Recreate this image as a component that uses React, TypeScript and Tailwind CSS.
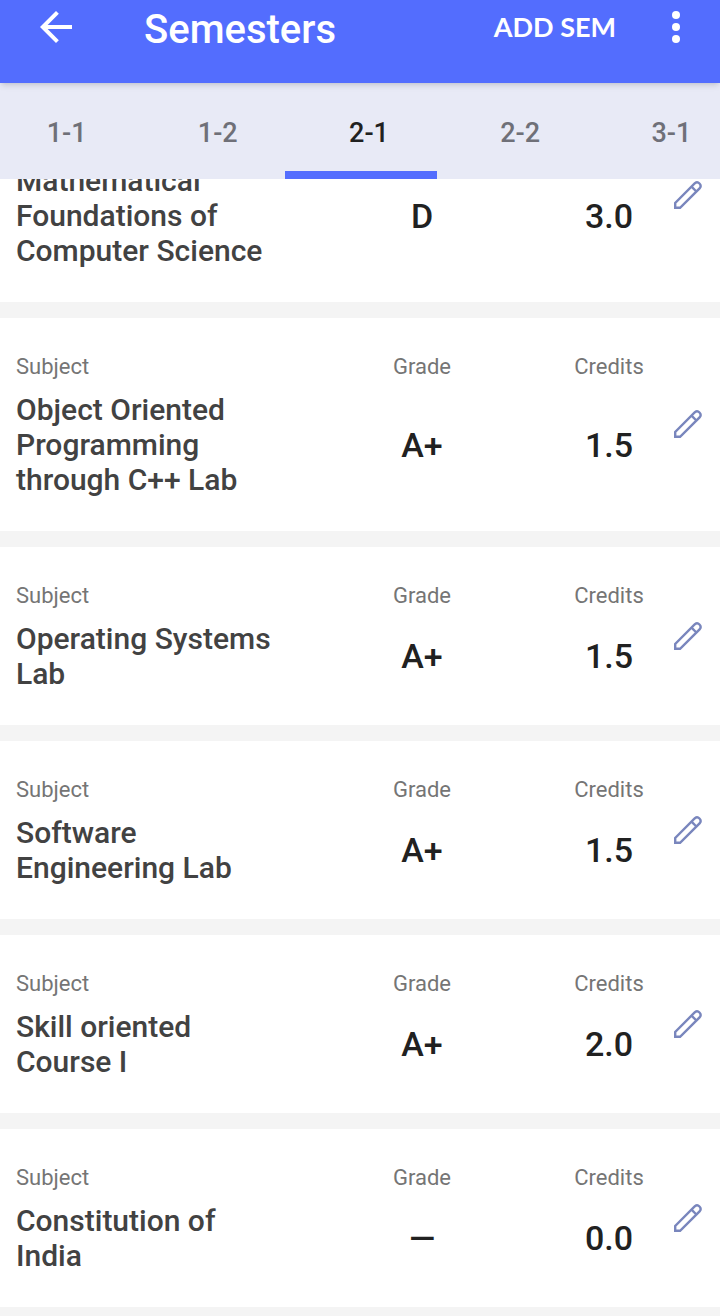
import { useState } from "react"

type Subject = {
  name: string
  grade: string
  credits: string
}

const semesters = ["1-1", "1-2", "2-1", "2-2", "3-1"]

const subjects: Subject[] = [
  { name: "Mathematical Foundations of Computer Science", grade: "D", credits: "3.0" },
  { name: "Object Oriented Programming through C++ Lab", grade: "A+", credits: "1.5" },
  { name: "Operating Systems Lab", grade: "A+", credits: "1.5" },
  { name: "Software Engineering Lab", grade: "A+", credits: "1.5" },
  { name: "Skill oriented Course I", grade: "A+", credits: "2.0" },
  { name: "Constitution of India", grade: "—", credits: "0.0" },
]

function BackIcon() {
  return (
    <svg width="48" height="48" viewBox="0 0 24 24" fill="#fff" aria-hidden="true">
      <path d="M20 11H7.83l5.59-5.59L12 4l-8 8 8 8 1.41-1.41L7.83 13H20v-2z" />
    </svg>
  )
}

function MoreIcon() {
  return (
    <svg width="48" height="48" viewBox="0 0 24 24" fill="#fff" aria-hidden="true">
      <circle cx="12" cy="6" r="2" />
      <circle cx="12" cy="12" r="2" />
      <circle cx="12" cy="18" r="2" />
    </svg>
  )
}

function PencilIcon() {
  return (
    <svg
      width="28"
      height="28"
      viewBox="0 0 28 28"
      fill="none"
      stroke="#7986bd"
      strokeWidth="2.4"
      aria-hidden="true"
    >
      <path d="M1.2 26.8v-4.9L20.9 2.2a3.5 3.5 0 0 1 4.9 4.9L6.1 26.8z" />
      <path d="M17.5 5.6l4.9 4.9" />
    </svg>
  )
}

function Label({ text, hidden }: { text: string; hidden: boolean }) {
  return (
    <dt
      className={
        hidden
          ? "invisible mb-3 text-[22px] leading-[26px]"
          : "mb-3 text-[22px] leading-[26px] text-[#757575]"
      }
    >
      {text}
    </dt>
  )
}

function SubjectCard({ name, grade, credits, tucked }: Subject & { tucked: boolean }) {
  return (
    <li className="flex items-center bg-white pt-9 pr-1 pb-[34px] pl-4">
      <dl className="grid flex-1 grid-cols-[270px_1fr_102px]">
        <div>
          <Label text="Subject" hidden={tucked} />
          <dd className="text-[30px] leading-[35px] font-medium text-[#424242]">{name}</dd>
        </div>
        <div className="flex flex-col items-center">
          <Label text="Grade" hidden={tucked} />
          <dd className="flex flex-1 items-center text-[34px] leading-10 font-medium text-[#212121]">
            {grade}
          </dd>
        </div>
        <div className="flex flex-col items-center">
          <Label text="Credits" hidden={tucked} />
          <dd className="flex flex-1 items-center text-[34px] leading-10 font-medium text-[#212121]">
            {credits}
          </dd>
        </div>
      </dl>
      <button
        type="button"
        aria-label={`Edit ${name}`}
        className="flex size-14 items-center justify-center pb-[3px]"
      >
        <PencilIcon />
      </button>
    </li>
  )
}

export default function App() {
  const [active, setActive] = useState("2-1")

  return (
    <div className="min-h-screen bg-[#f4f4f4] font-[Roboto,sans-serif]">
      <header className="relative z-10 flex h-[83px] items-start bg-[#536dfe] px-8 pt-[3px] text-white shadow-md">
        <button type="button" aria-label="Back">
          <BackIcon />
        </button>
        <h1 className="ml-16 flex-1 text-[40px] leading-[54px] font-medium">Semesters</h1>
        <button type="button" className="font-[Lato,sans-serif] text-[27px] leading-[48px] font-bold">
          ADD SEM
        </button>
        <button type="button" aria-label="More options" className="-mr-3 ml-9">
          <MoreIcon />
        </button>
      </header>

      <div role="tablist" className="flex h-24 overflow-hidden bg-[#e8eaf6]">
        <div className="-ml-[9px] flex w-full">
          {semesters.map((semester) => (
            <button
              key={semester}
              type="button"
              role="tab"
              aria-selected={semester === active}
              onClick={() => setActive(semester)}
              className={
                semester === active
                  ? "relative w-[21%] shrink-0 pt-1 text-[27px] font-medium text-[#212121]"
                  : "relative w-[21%] shrink-0 pt-1 text-[27px] font-medium text-[#6f7078]"
              }
            >
              {semester}
              {semester === active && (
                <span className="absolute right-2 bottom-0 h-2 w-full bg-[#536dfe]" />
              )}
            </button>
          ))}
        </div>
      </div>

      {/* The list is scrolled, so the first card is partly cut off under the tabs */}
      <main className="overflow-hidden">
        <ul className="-mt-[90px] flex flex-col gap-4">
          {subjects.map((subject, index) => (
            <SubjectCard key={subject.name} {...subject} tucked={index === 0} />
          ))}
        </ul>
      </main>
    </div>
  )
}
